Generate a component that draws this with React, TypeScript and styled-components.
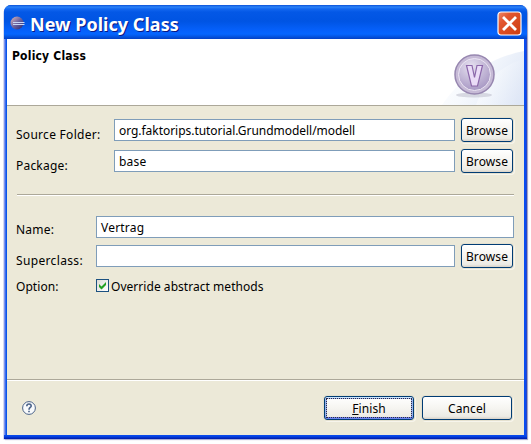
import React from 'react';
import styled, { createGlobalStyle } from 'styled-components';

const GlobalStyle = createGlobalStyle`
  * { box-sizing: border-box; }
  body { margin: 0; background: #fff; color: #000; font: 12px/16px "Noto Sans", sans-serif; }
`;

const Screen = styled.main`
  width: 531px;
  height: 444px;
  padding: 5px 0 0 4px;
  overflow: hidden;
`;

const Window = styled.section`
  display: flex;
  flex-direction: column;
  width: 523px;
  height: 434px;
  padding: 0 3px 4px;
  border-radius: 7px 7px 0 0;
  background:
    linear-gradient(to bottom, #0a4cf0, #0441e0 40%, #0019a8) bottom / 100% 4px no-repeat,
    linear-gradient(to right, #7f96ea 0 1px, #3a6cf0 1px 2px, #0855e8 2px 3px, transparent 3px calc(100% - 3px), #0a4cf0 calc(100% - 3px) calc(100% - 1px), #2747c8 calc(100% - 1px)) 0 30px no-repeat,
    #0855dd;
  box-shadow: -1px 1px 0 -0.5px #a9b4e6, 1px 1px 1px rgba(90, 90, 150, 0.6);
`;

const TitleBar = styled.header`
  display: flex;
  align-items: center;
  flex: 0 0 34px;
  margin: 0 -3px;
  padding: 2px 5px 0 6px;
  border-radius: 7px 7px 0 0;
  background: linear-gradient(to bottom, #0a50d8 0, #2c83f8 2px, #1367f0 4px, #0458e6 7px, #0054e3 16px, #0560fa 25px, #0566ff 29px, #0459e8 31px, #0340c4 34px);
`;

const Title = styled.h1`
  flex: 1;
  margin: 0 0 0 5px;
  padding-top: 1px;
  color: #fff;
  font: bold 18px/26px "Noto Sans", sans-serif;
  letter-spacing: 0.03px;
  text-shadow: 1px 1px 0 #0a1883;
  white-space: nowrap;
`;

const CloseButton = styled.button`
  display: flex;
  width: 25px;
  height: 25px;
  margin: 0;
  padding: 0;
  border: 0;
  background: none;
`;

const Header = styled.div`
  display: flex;
  justify-content: space-between;
  flex: 0 0 67px;
  padding: 9px 0 0 5px;
  overflow: hidden;
  border-bottom: 1px solid #aca899;
  background: #fff;
`;

const Heading = styled.h2`
  margin: 0;
  font: bold 12px/16px "DejaVu Sans Condensed", sans-serif;
  letter-spacing: 0.2px;
`;

const Banner = styled.svg`
  flex: none;
  width: 90px;
  height: 66px;
  margin-top: -9px;
`;

const Body = styled.div`
  flex: 1;
  padding: 12px 10px 0 9px;
  background: #ece9d8;
`;

const Row = styled.div<{ $label: number; $height: number }>`
  display: grid;
  grid-template-columns: ${(p) => p.$label}px 1fr;
  align-items: start;
  height: ${(p) => p.$height}px;
`;

const Label = styled.label<{ $spacing?: number; $top: number }>`
  padding-top: ${(p) => p.$top}px;
  letter-spacing: ${(p) => p.$spacing ?? 0.05}px;
  white-space: nowrap;
`;

const Controls = styled.div`
  display: flex;
  align-items: center;
  gap: 6px;
  padding-right: 1px;
`;

const Field = styled.div<{ $spacing?: number }>`
  flex: 1;
  height: 22px;
  padding: 3px 4px 0;
  border: 1px solid #7f9db9;
  background: #fff;
  letter-spacing: ${(p) => p.$spacing ?? 0}px;
  white-space: nowrap;
`;

const WideField = styled(Field)`
  margin-right: -1px;
`;

const Button = styled.button<{ $width: number; $focused?: boolean }>`
  flex: none;
  width: ${(p) => p.$width}px;
  height: 24px;
  margin: 0;
  padding: 1px 0 0;
  border: 1px solid #003c74;
  border-radius: 3px;
  background: linear-gradient(#fff, #f6f5f1 50%, #ecebe5 88%, #d8d2c8);
  box-shadow: ${(p) => (p.$focused ? 'inset 0 1px 0 #cee7ff, inset 0 -2px 0 #6982ee, inset 0 0 0 2px #98b4ec, ' : '')}0 0 0 1px #e4e0cf, 1px 1px 0 1px #f7f5ec;
  color: #000;
  font: 12px/16px "Noto Sans", sans-serif;
  letter-spacing: 0.1px;
`;

const FocusRing = styled.span`
  display: block;
  height: 20px;
  margin: 0 1px 1px;
  border: 1px dotted #302a45;
  line-height: 20px;
`;

const Divider = styled.hr`
  height: 2px;
  margin: 0 0 20px 1px;
  border: 0;
  background: linear-gradient(#aca899 50%, #fff 50%);
`;

const FooterDivider = styled(Divider)`
  margin: 0;
`;

const CheckRow = styled.div`
  display: flex;
  align-items: flex-start;
  gap: 2px;
  padding-top: 4px;
  letter-spacing: 0.04px;
  white-space: nowrap;
`;

const CheckBox = styled.span`
  display: flex;
  width: 13px;
  height: 13px;
  border: 1px solid #1c5180;
  background: linear-gradient(135deg, #dcdcd7, #fff);
`;

const Footer = styled.footer`
  flex: 0 0 56px;
  background: #ece9d8;
`;

const FooterContent = styled.div`
  display: flex;
  align-items: center;
  gap: 8px;
  padding: 15px 12px 0 15px;
`;

const Spacer = styled.span`
  flex: 1;
`;

const EclipseIcon = () => (
  <svg width="15" height="15" viewBox="0 0 15 15">
    <defs>
      <linearGradient id="globe" x1="0" x2="1" y1="0" y2="1">
        <stop offset="0" stopColor="#e0b9b8" />
        <stop offset="0.5" stopColor="#6d64a0" />
        <stop offset="1" stopColor="#27246e" />
      </linearGradient>
    </defs>
    <circle cx="7" cy="7" r="6.5" fill="url(#globe)" />
    <path d="M3 6.500h11.500M3 8.500h11.500" stroke="#c8d6f5" strokeWidth="1" />
  </svg>
);

const CloseIcon = () => (
  <svg width="25" height="25" viewBox="0 0 25 25">
    <defs>
      <linearGradient id="close" x1="0" x2="1" y1="0" y2="1">
        <stop offset="0" stopColor="#ee8a6c" />
        <stop offset="0.3" stopColor="#e2552f" />
        <stop offset="1" stopColor="#cc3d10" />
      </linearGradient>
    </defs>
    <rect x="1" y="1" width="23" height="23" rx="3" fill="url(#close)" stroke="#fff" strokeWidth="1.200" />
    <path d="M7 7l11 11M18 7L7 18" stroke="#fff" strokeWidth="2.800" strokeLinecap="square" />
  </svg>
);

const PolicyBanner = () => (
  <Banner viewBox="0 0 90 66">
    <defs>
      <linearGradient id="sweep" x1="0" x2="1" y1="0.3" y2="0.7">
        <stop offset="0" stopColor="#fff" />
        <stop offset="0.4" stopColor="#f6f9fd" />
        <stop offset="1" stopColor="#dfe7f6" />
      </linearGradient>
      <radialGradient id="disc" cx="0.4" cy="0.25" r="0.8">
        <stop offset="0" stopColor="#e6e1f0" />
        <stop offset="0.6" stopColor="#bfb3d4" />
        <stop offset="1" stopColor="#a595c2" />
      </radialGradient>
    </defs>
    <path d="M90 12C60 18 30 34 8 66h82z" fill="url(#sweep)" />
    <path d="M90 20C68 26 50 42 42 66h48z" fill="url(#sweep)" opacity="0.6" />
    <ellipse cx="40" cy="56" rx="18" ry="2.500" fill="#b9b9c8" opacity="0.5" />
    <circle cx="40.500" cy="35.500" r="19.500" fill="#c6bad6" stroke="#9787b0" strokeWidth="1.500" />
    <circle cx="40.500" cy="35.500" r="16" fill="url(#disc)" stroke="#ebe5f3" strokeWidth="1" />
    <path d="M32.500 26.500h5.500l2.500 12 2.500-12h5.500l-5 20.500h-6z" fill="#eadcf7" stroke="#8b67aa" strokeWidth="1.200" />
  </Banner>
);

const CheckIcon = () => (
  <svg width="11" height="11" viewBox="0 0 11 11">
    <path d="M2 4v3l2.500 2.500L9 5V2L4.500 6.500z" fill="#21a121" />
  </svg>
);

const HelpIcon = () => (
  <svg width="14" height="14" viewBox="0 0 14 14" fill="none" stroke="#4a6288">
    <circle cx="7" cy="7" r="6.400" fill="#f8fafc" strokeWidth="1" />
    <path d="M4.800 5.200C4.800 2.400 9.200 2.400 9.200 4.900C9.200 6.500 7 6.500 7 8.700M7 9.800v1.500" strokeWidth="1.600" />
  </svg>
);

export default function App() {
  return (
    <Screen>
      <GlobalStyle />
      <Window>
        <TitleBar>
          <EclipseIcon />
          <Title>New Policy Class</Title>
          <CloseButton aria-label="Close"><CloseIcon /></CloseButton>
        </TitleBar>
        <Header>
          <Heading>Policy Class</Heading>
          <PolicyBanner />
        </Header>
        <Body>
          <Row $label={98} $height={31}>
            <Label $top={9} $spacing={0.28}>Source Folder:</Label>
            <Controls>
              <Field $spacing={-0.04}>org.faktorips.tutorial.Grundmodell/modell</Field>
              <Button $width={52}>Browse</Button>
            </Controls>
          </Row>
          <Row $label={98} $height={45}>
            <Label $top={9} $spacing={0.2}>Package:</Label>
            <Controls>
              <Field $spacing={0.2}>base</Field>
              <Button $width={52}>Browse</Button>
            </Controls>
          </Row>
          <Divider />
          <Row $label={80} $height={28}>
            <Label $top={6} $spacing={0.2}>Name:</Label>
            <Controls>
              <WideField $spacing={0.2}>Vertrag</WideField>
            </Controls>
          </Row>
          <Row $label={80} $height={31}>
            <Label $top={9} $spacing={0.35}>Superclass:</Label>
            <Controls>
              <Field />
              <Button $width={52}>Browse</Button>
            </Controls>
          </Row>
          <Row $label={80} $height={20}>
            <Label $top={4}>Option:</Label>
            <CheckRow>
              <CheckBox role="checkbox" aria-checked><CheckIcon /></CheckBox>
              Override abstract methods
            </CheckRow>
          </Row>
        </Body>
        <Footer>
          <FooterDivider />
          <FooterContent>
            <HelpIcon />
            <Spacer />
            <Button $width={90} $focused><FocusRing><u>F</u>inish</FocusRing></Button>
            <Button $width={90}>Cancel</Button>
          </FooterContent>
        </Footer>
      </Window>
    </Screen>
  );
}
